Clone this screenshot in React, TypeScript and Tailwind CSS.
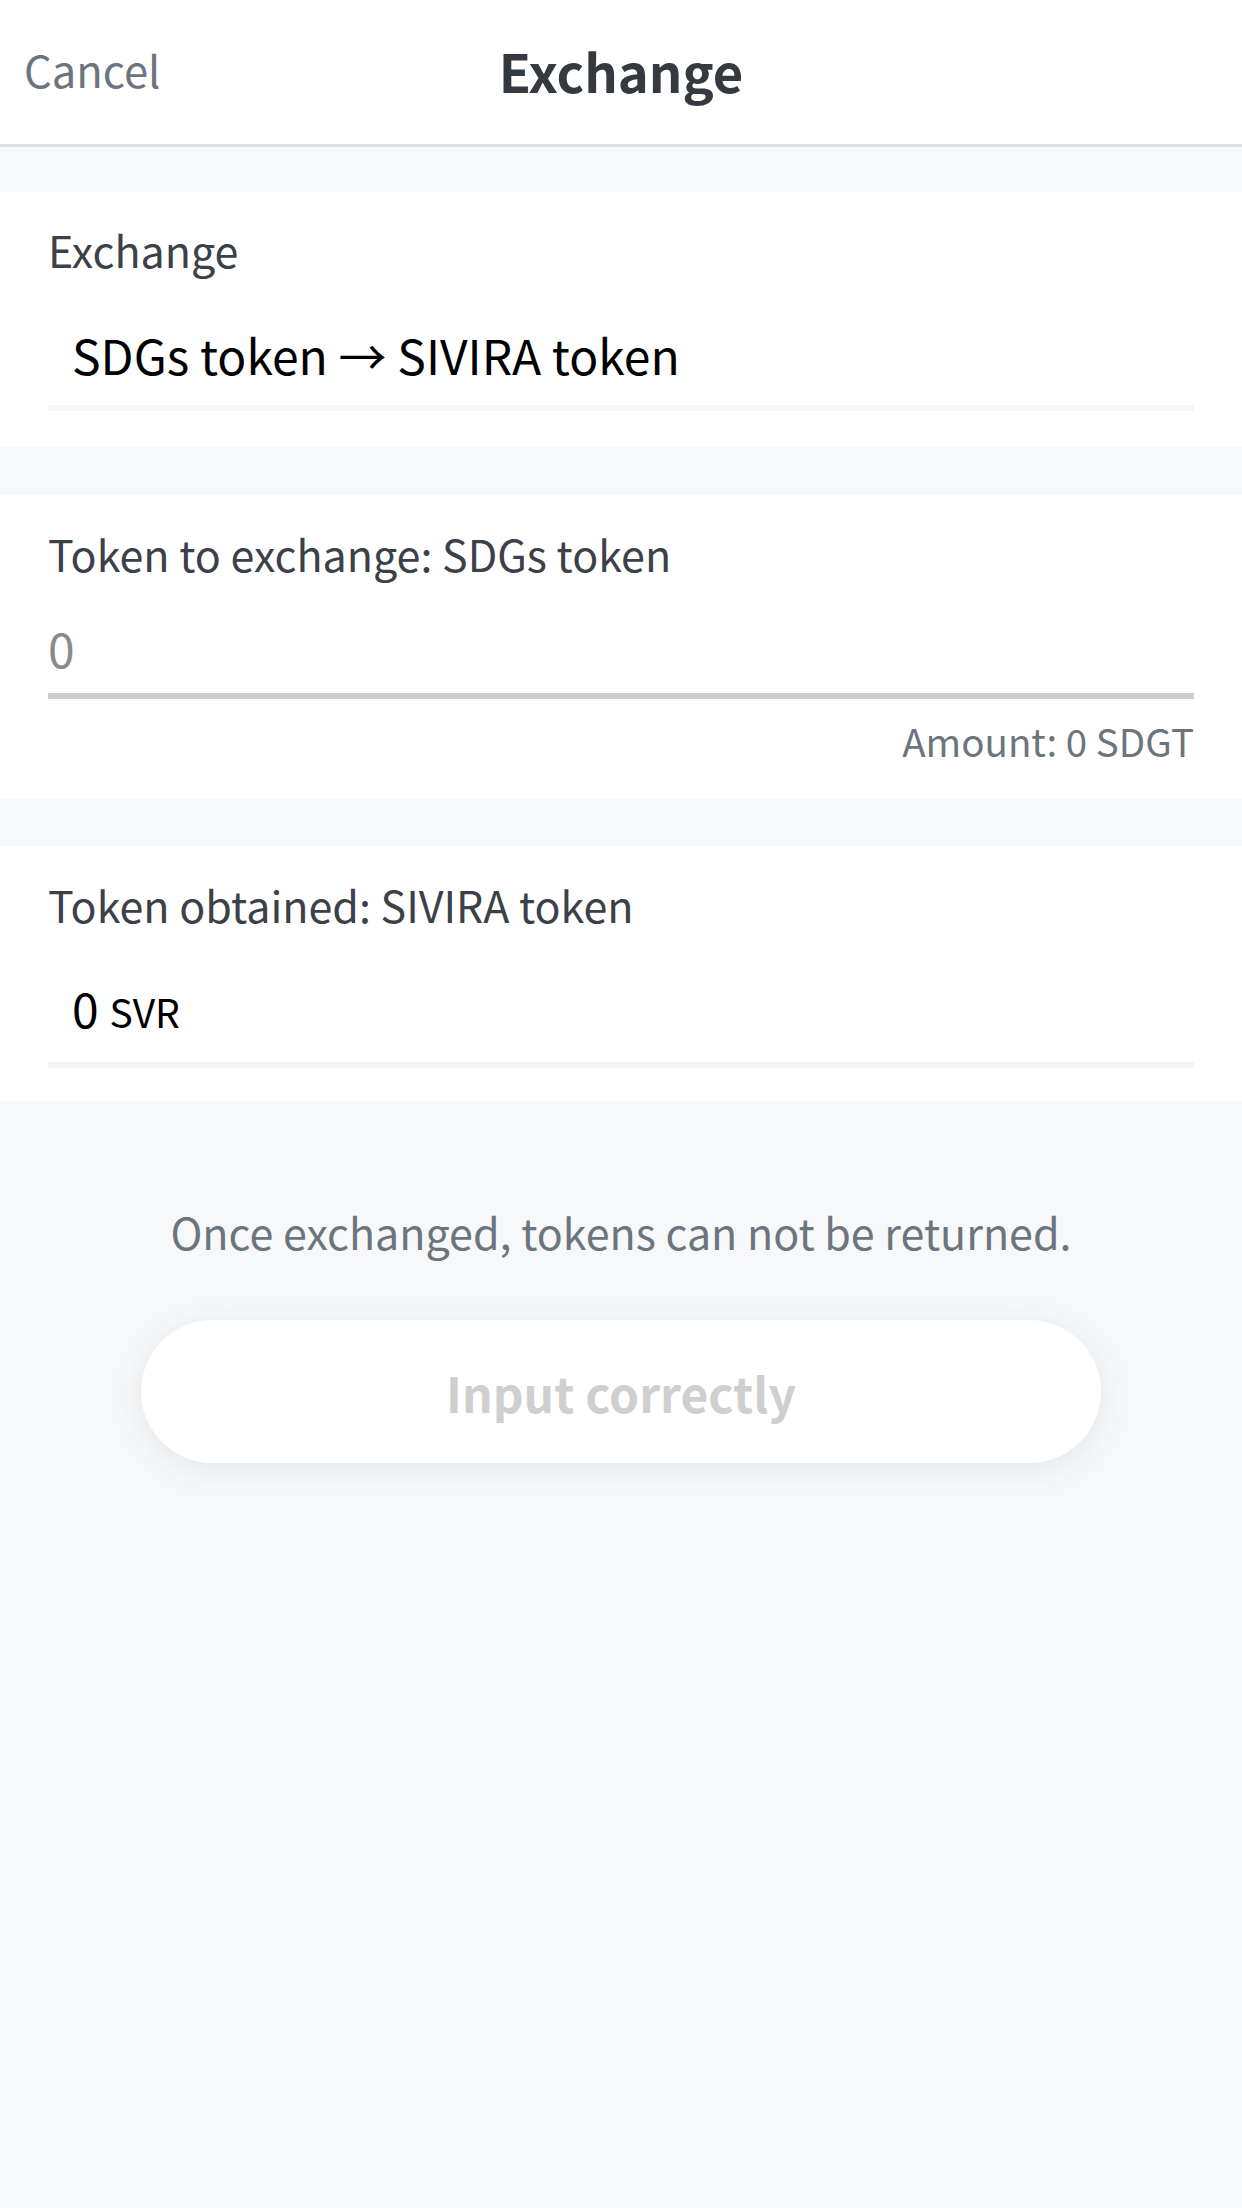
export default function App() {
  return (
    <div className="min-h-[2208px] bg-[#f7f8fa] font-['Noto_Sans_CJK_JP',sans-serif]">
      <div className="grid h-[147px] grid-cols-[1fr_auto_1fr] items-center border-b-[3px] border-[#dedfe3] bg-white pb-[4px]">
        <div className="pl-[24px] text-[43.5px] text-[#6c757d]">Cancel</div>
        <div className="text-[52.5px] font-bold text-[#343a40]">Exchange</div>
        <div />
      </div>
      <div className="h-[45px]" />

      <div className="bg-white px-[48px] pt-[33px] pb-[36px]">
        <div className="text-[43px] leading-[48px] text-[#3c4047]">Exchange</div>
        <div className="mt-[51px] pl-[24px] text-[48px] leading-[60px] text-black">
          SDGs token → SIVIRA token
        </div>
        <div className="mt-[21px] h-[6px] bg-[#f4f5f7]" />
      </div>
      <div className="h-[48px]" />

      <div className="bg-white px-[48px] pt-[34px] pb-[37px]">
        <div className="text-[43px] leading-[48px] text-[#3c4047]">Token to exchange: SDGs token</div>
        <div className="mt-[40px] text-[48px] leading-[60px] text-[#8a8a8a]">0</div>
        <div className="mt-[16px] h-[6px] bg-[#cccccc]" />
        <div className="mt-[20px] text-right text-[38.5px] leading-[42px] text-[#6c757d]">Amount: 0 SDGT</div>
      </div>
      <div className="h-[48px]" />

      <div className="bg-white px-[48px] pt-[34px] pb-[33px]">
        <div className="text-[43px] leading-[48px] text-[#3c4047]">Token obtained: SIVIRA token</div>
        <div className="mt-[49px] pl-[24px] text-[48px] leading-[60px] text-black">
          0 <span className="text-[39px] leading-none">SVR</span>
        </div>
        <div className="mt-[25px] h-[6px] bg-[#f4f5f7]" />
      </div>

      <div className="mt-[106px] text-center text-[43px] leading-[48px] text-[#6c757d]">
        Once exchanged, tokens can not be returned.
      </div>
      <div className="mx-auto mt-[65px] flex h-[143px] w-[960px] items-center justify-center rounded-full bg-white shadow-[0_6px_36px_rgba(0,0,0,0.08)]">
        <span className="text-[48px] font-bold text-[#cfcfcf]">Input correctly</span>
      </div>
    </div>
  );
}
